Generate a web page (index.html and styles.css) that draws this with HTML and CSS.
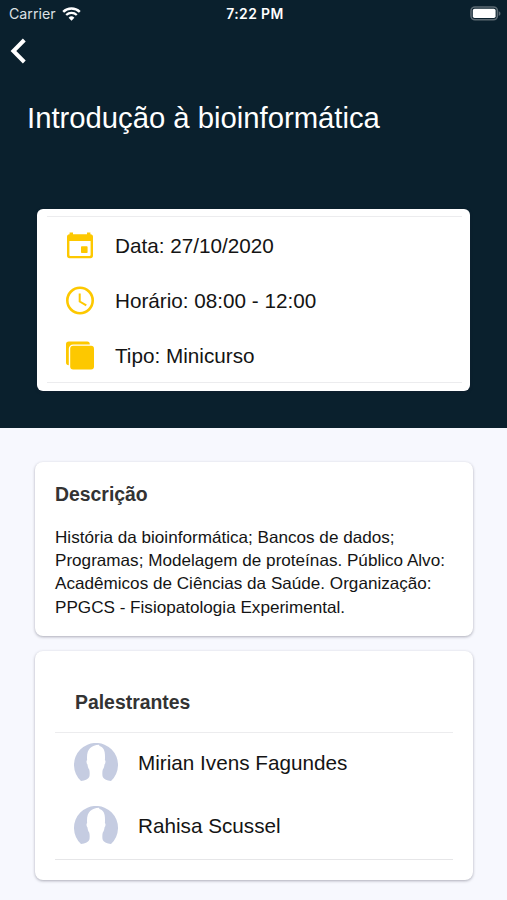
FILE: index.html
```
<!DOCTYPE html>
<html lang="pt-BR">
<head>
    <meta charset="UTF-8">
    <meta name="viewport" content="width=device-width, initial-scale=1.0">
    <title>Introdução à bioinformática</title>
    <link rel="stylesheet" href="styles.css">
</head>
<body>
    <header class="header">
        <div class="status-bar">
            <div class="carrier">
                <span>Carrier</span>
                <svg class="wifi" viewBox="0 0 19 14">
                    <path d="M1.2 4.9a12 12 0 0 1 16.6 0" fill="none" stroke="#fff" stroke-width="2.5"/>
                    <path d="M4.2 8a7.7 7.7 0 0 1 10.6 0" fill="none" stroke="#fff" stroke-width="2.3"/>
                    <path d="M9.5 13.7l-2.9-3a4.1 4.1 0 0 1 5.8 0z" fill="#fff"/>
                </svg>
            </div>
            <span class="time">7:22 PM</span>
            <svg class="battery" viewBox="0 0 31 15">
                <rect x="1" y="1" width="26.400" height="12.800" rx="4" fill="none" stroke="#5c6a73" stroke-width="1.600"/>
                <rect x="2.8" y="2.800" width="22.800" height="9.200" rx="1.800" fill="#fff"/>
                <path d="M28.8 5.200v4.600c2.200-.8 2.200-3.800 0-4.600z" fill="#5c6a73"/>
            </svg>
        </div>
        <button type="button" class="btn-back" aria-label="Voltar">
            <svg viewBox="0 0 16 26">
                <path d="M14.300 2L3.400 13l10.900 11" fill="none" stroke="#fff" stroke-width="4"/>
            </svg>
        </button>
        <h1 class="title">Introdução à bioinformática</h1>
        <div class="card card-info">
            <ul class="info-list">
                <li>
                    <svg viewBox="0 0 30 30">
                        <path fill="#fdc800" fill-rule="evenodd" d="M4.600 1.500h3.400v1.700h14V1.500h3.400v1.700a2.600 2.600 0 0 1 2.600 2.600v18.800a2.600 2.600 0 0 1-2.600 2.600H4.600A2.600 2.600 0 0 1 2 24.600V5.800a2.600 2.600 0 0 1 2.600-2.600zM4.400 10v14c0 .5.400.9.900.9h19.400c.5 0 .9-.4.9-.9V10z"/>
                        <rect x="16" y="15.300" width="6.600" height="6.800" rx="0.800" fill="#fdc800"/>
                    </svg>
                    <span>Data: 27/10/2020</span>
                </li>
                <li>
                    <svg viewBox="0 0 30 30">
                        <circle cx="15" cy="14.500" r="12.700" fill="none" stroke="#fdc800" stroke-width="2.600"/>
                        <path d="M14.700 7.500v8l6.600 3.900" fill="none" stroke="#fdc800" stroke-width="2"/>
                    </svg>
                    <span>Horário: 08:00 - 12:00</span>
                </li>
                <li>
                    <svg viewBox="0 0 30 30">
                        <path fill="#fdc800" d="M3.800.5h18.400a2.800 2.800 0 0 1 2.600 2.900H8.200a4.400 4.400 0 0 0-4.400 4.400v16.400A2.800 2.800 0 0 1 1 21.500V3.300A2.800 2.800 0 0 1 3.800.5z"/>
                        <rect x="5.200" y="4.700" width="23.800" height="23.800" rx="2.900" fill="#fdc800"/>
                    </svg>
                    <span>Tipo: Minicurso</span>
                </li>
            </ul>
        </div>
    </header>

    <main class="content">
        <section class="card card-desc">
            <h2>Descrição</h2>
            <p>História da bioinformática; Bancos de dados; Programas; Modelagem de proteínas. Público Alvo: Acadêmicos de Ciências da Saúde. Organização: PPGCS - Fisiopatologia Experimental.</p>
        </section>

        <section class="card card-speakers">
            <h2>Palestrantes</h2>
            <ul class="speakers">
                <li>
                    <svg class="avatar" viewBox="0 0 44 40">
                        <path fill="#c5cce1" d="M7 38A22 22 0 1 1 37 38C33 37.500 29 36 28.500 33c-.3-2.500-.2-4.800.3-6.500 1-1.400 1.500-3 1.700-5 1.100-1 1.400-4 .4-4.600C31.500 8 30 4.500 25.500 3L25 1.800C17 2.500 12.300 6 13.100 16.900c-1 .6-.7 3.600.4 4.600.2 2 .7 3.600 1.700 5 .5 1.700.6 4 .3 6.500C15 36 11 37.500 7 38z"/>
                    </svg>
                    <span>Mirian Ivens Fagundes</span>
                </li>
                <li>
                    <svg class="avatar" viewBox="0 0 44 40">
                        <path fill="#c5cce1" d="M7 38A22 22 0 1 1 37 38C33 37.500 29 36 28.500 33c-.3-2.500-.2-4.800.3-6.500 1-1.400 1.500-3 1.700-5 1.100-1 1.400-4 .4-4.600C31.500 8 30 4.500 25.500 3L25 1.800C17 2.500 12.300 6 13.100 16.900c-1 .6-.7 3.600.4 4.600.2 2 .7 3.600 1.700 5 .5 1.700.6 4 .3 6.500C15 36 11 37.500 7 38z"/>
                    </svg>
                    <span>Rahisa Scussel</span>
                </li>
            </ul>
        </section>
    </main>
</body>
</html>
```
FILE: styles.css
```
* {
    box-sizing: border-box;
}

body {
    margin: 0;
    min-height: 900px;
    background-color: #f7f8fe;
    color: #141414;
    font-family: "Liberation Sans", Arial, sans-serif;
}

h1, h2, p, ul {
    margin: 0;
    padding: 0;
}

ul {
    list-style: none;
}

svg {
    display: block;
    flex: none;
}

.header {
    height: 428px;
    background-color: #0a202d;
    color: #fff;
}

.status-bar {
    display: grid;
    grid-template-columns: 1fr auto 1fr;
    align-items: center;
    height: 27px;
    padding: 0 6px 0 9px;
    font-family: Inter, sans-serif;
    font-size: 14.2px;
}

.carrier {
    display: flex;
    align-items: center;
    gap: 6px;
    color: #dde1e4;
}

.wifi {
    width: 19px;
    height: 14px;
}

.time {
    font-size: 13.9px;
    font-weight: 600;
    letter-spacing: 0.4px;
}

.battery {
    width: 31px;
    height: 15px;
    justify-self: end;
}

.btn-back {
    display: block;
    margin: 11px 0 0 10px;
    padding: 0;
    border: none;
    background: none;
}

.btn-back svg {
    width: 16px;
    height: 26px;
}

.title {
    margin: 36px 0 0 27px;
    font-size: 29.25px;
    font-weight: normal;
    line-height: 36px;
}

.card {
    background-color: #fff;
    border-radius: 8px;
    box-shadow: 0 1px 3px rgba(30, 30, 50, 0.35);
}

.card-info {
    height: 182px;
    margin: 73px 37px 0 37px;
    padding: 7px 8px 8px 10px;
    border-radius: 6px;
    color: #141414;
}

.info-list {
    height: 167px;
    padding-top: 1px;
    border-top: 1px solid #ececee;
    border-bottom: 1px solid #ececee;
}

.info-list li {
    display: flex;
    align-items: center;
    gap: 20px;
    height: 55px;
    padding-left: 18px;
    font-size: 20.7px;
}

.info-list svg {
    width: 30px;
    height: 30px;
}

.content {
    padding: 34px 34px 20px 35px;
}

.card h2 {
    color: #333;
    font-size: 19.4px;
    line-height: 24px;
}

.card-desc {
    height: 174px;
    padding: 20px 20px 0;
}

.card-desc p {
    margin-top: 20px;
    font-size: 17.12px;
    line-height: 23.2px;
}

.card-speakers {
    height: 229px;
    margin-top: 15px;
    padding: 39px 20px 0;
}

.card-speakers h2 {
    padding-left: 20px;
}

.speakers {
    height: 128px;
    margin-top: 18px;
    border-top: 1px solid #ececee;
    border-bottom: 1px solid #e6e6e8;
}

.speakers li {
    display: flex;
    align-items: center;
    gap: 20px;
    height: 63px;
    padding: 0 0 4px 19px;
    font-size: 20.7px;
}

.avatar {
    width: 44px;
    height: 40px;
}
```
